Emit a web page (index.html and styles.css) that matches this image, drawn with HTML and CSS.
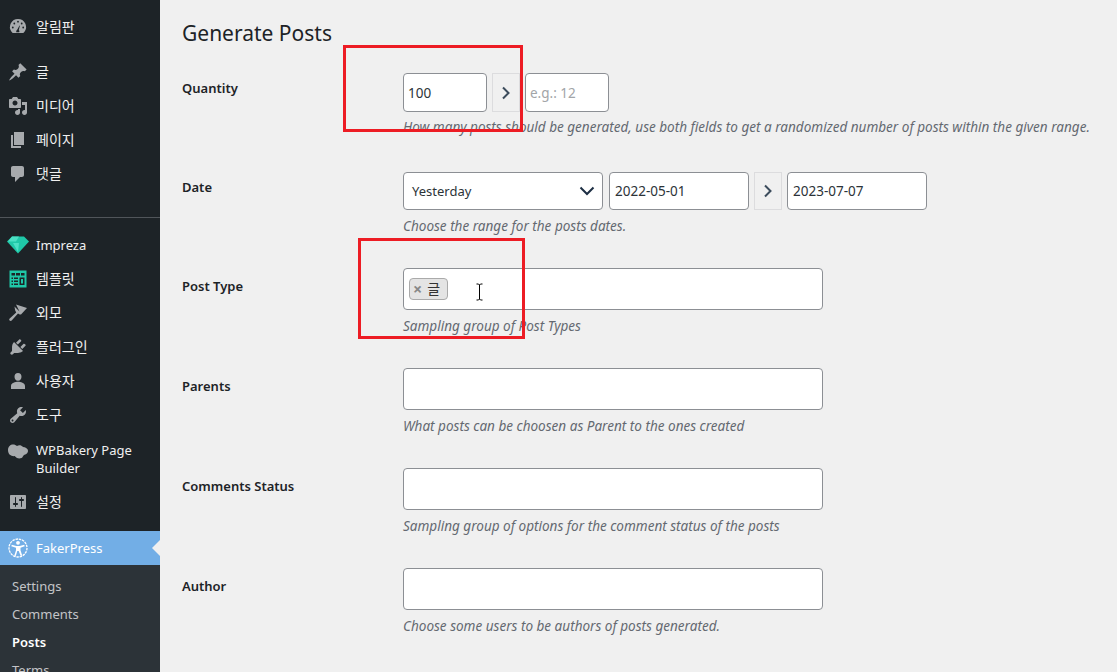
FILE: index.html
```html
<!DOCTYPE html>
<html lang="ko">
<head>
    <meta charset="UTF-8">
    <meta name="viewport" content="width=device-width, initial-scale=1.0">
    <title>Generate Posts</title>
    <link rel="stylesheet" href="styles.css">
</head>
<body>
    <!-- Admin menu -->
    <aside class="sidebar">
        <ul class="menu menu-top">
            <li class="menu-item menu-first">
                <svg class="menu-icon" viewBox="0 0 20 20"><path d="M10 2a8 8 0 0 1 6.500 12.700l-1.200 1.300H4.700l-1.200-1.300A8 8 0 0 1 10 2z"/><g class="icon-cut"><circle cx="4.800" cy="10.500" r=".9"/><circle cx="6.300" cy="6.500" r=".9"/><circle cx="10" cy="4.700" r=".9"/><circle cx="13.700" cy="6.500" r=".9"/><circle cx="15.200" cy="10.500" r=".9"/><path d="M8.300 15.200c-.3-1 .2-2 .9-2.400l2.300-4.300.4.200-1.100 4.200c.6.600.8 1.500.4 2.300z"/></g></svg>
                <span class="label-ko">알림판</span>
            </li>
            <li class="menu-item menu-gap">
                <svg class="menu-icon" viewBox="0 0 20 20"><path d="M10.440 3.020l1.820-1.820 6.360 6.350-1.830 1.820c-1.050-.68-2.480-.57-3.410.36l-.75.75c-.92.93-1.040 2.350-.35 3.410l-1.830 1.820-2.410-2.410-2.800 2.790c-.42.42-3.380 2.710-3.800 2.290s1.860-3.390 2.280-3.810l2.790-2.790L4.100 9.360l1.830-1.820c1.050.69 2.480.57 3.400-.36l.75-.75c.93-.92 1.050-2.350.36-3.410z"/></svg>
                <span class="label-ko">글</span>
            </li>
            <li class="menu-item">
                <svg class="menu-icon" viewBox="0 0 20 20"><path fill-rule="evenodd" d="M13 11V4c0-.55-.45-1-1-1h-1.670L9 1H5L3.670 3H2c-.55 0-1 .45-1 1v7c0 .55.45 1 1 1h10c.55 0 1-.45 1-1zM7 4.500c1.380 0 2.500 1.120 2.500 2.500S8.380 9.500 7 9.500 4.500 8.380 4.500 7 5.620 4.500 7 4.500zM14 6h5v10.500c0 1.380-1.120 2.500-2.500 2.500S14 17.880 14 16.500s1.120-2.500 2.500-2.500c.17 0 .34.020.5.050V9h-3V6zm-4 8.050V13h2v3.500c0 1.380-1.120 2.500-2.500 2.500S7 17.880 7 16.500 8.120 14 9.500 14c.17 0 .34.020.5.050z"/></svg>
                <span class="label-ko">미디어</span>
            </li>
            <li class="menu-item">
                <svg class="menu-icon" viewBox="0 0 20 20"><path d="M6 15V2h10v13H6zm-1 1h8v2H3V5h2v11z"/></svg>
                <span class="label-ko">페이지</span>
            </li>
            <li class="menu-item">
                <svg class="menu-icon" viewBox="0 0 20 20"><path d="M5 2h9c1.100 0 2 .9 2 2v7c0 1.100-.9 2-2 2h-2l-5 5v-5H5c-1.100 0-2-.9-2-2V4c0-1.100.9-2 2-2z"/></svg>
                <span class="label-ko">댓글</span>
            </li>
        </ul>
        <div class="menu-separator"></div>
        <ul class="menu">
            <li class="menu-item">
                <svg class="menu-icon icon-wide" viewBox="0 0 24 20"><path class="gem-dark" d="M1 6.500L6 1.500h12l5 5L12 18.500z"/><path class="gem-light" d="M6 1.500h7l-3 5H2zM7 8l5 9 1-9z"/></svg>
                <span>Impreza</span>
            </li>
            <li class="menu-item">
                <svg class="menu-icon icon-template" viewBox="0 0 20 20"><path fill-rule="evenodd" d="M1.500 1.500h17v17h-17zM3.500 4v2.500h3.500V4zM8 4v2.500h4V4zM13 4v2.500h3.500V4zM3.500 8.500v1.500h1.500V8.500zM6 8.500v1.500h4V8.500zM3.500 11.500V13h1.500v-1.500zM6 11.500V13h4v-1.500zM3.500 14.500V16h1.500v-1.500zM6 14.500V16h4v-1.500zM11.500 8.500V16h5V8.500zM13 10h2v4.500h-2z"/></svg>
                <span class="label-ko">템플릿</span>
            </li>
            <li class="menu-item">
                <svg class="menu-icon" viewBox="0 0 20 20"><path d="M8 1.500l11 3.500-6 6.500zM6.500 3.500l7 7-1.300 1.300-2.200-1.200-6.300 6.900c-.6.600-1.600.600-2.100 0-.6-.6-.5-1.500.1-2.100l6.500-5.900-1.100-2.300z"/></svg>
                <span class="label-ko">외모</span>
            </li>
            <li class="menu-item">
                <svg class="menu-icon" viewBox="0 0 20 20"><path d="M13.110 4.360L9.870 7.600 8 5.730l3.240-3.240c.35-.34 1.050-.2 1.560.32.520.51.660 1.210.310 1.550zm-8 1.770l.91-1.120 9.010 9.010-1.190.840c-.71.710-2.630 1.160-3.820 1.160H6.140L4.900 17.260c-.59.590-1.540.590-2.120 0-.59-.58-.59-1.530 0-2.120l1.240-1.240v-3.880c0-1.130.4-3.190 1.090-3.890zm7.260 3.970l3.240-3.240c.34-.35 1.040-.21 1.550.31.520.51.660 1.210.310 1.550l-3.240 3.250z"/></svg>
                <span class="label-ko">플러그인</span>
            </li>
            <li class="menu-item">
                <svg class="menu-icon" viewBox="0 0 20 20"><path d="M10 9.800c-2.300 0-3.500-1.900-3.500-4S7.700 2 10 2s3.500 1.700 3.500 3.800-1.200 4-3.500 4zM10 10.800c2.500 0 7 1 7 4.200v3H3v-3c0-3.200 4.500-4.200 7-4.200z"/></svg>
                <span class="label-ko">사용자</span>
            </li>
            <li class="menu-item">
                <svg class="menu-icon" viewBox="0 0 20 20"><path fill-rule="evenodd" d="M16.680 9.770c-1.340 1.340-3.300 1.670-4.950.99l-5.410 6.520c-.99.99-2.590.99-3.570 0-.99-.98-.99-2.580 0-3.570l6.520-5.420c-.68-1.650-.35-3.610.99-4.950 1.280-1.280 3.120-1.620 4.720-1.060l-2.890 2.890 2.820 2.820 2.860-2.870c.53 1.580.18 3.410-1.090 4.670zM3.810 16.210c.4.390 1.040.39 1.430 0 .4-.4.4-1.040 0-1.430-.39-.4-1.030-.4-1.430 0-.39.39-.39 1.030 0 1.430z"/></svg>
                <span class="label-ko">도구</span>
            </li>
            <li class="menu-item menu-tall">
                <svg class="menu-icon icon-cloud" viewBox="0 0 20 20"><path d="M5 .5c1.700 0 3 .6 4 1.500 1.300-1 3-.9 4-.4 1 .5 1.500 1.200 2.300 1.500 2 .2 4.700 1.500 4.700 4 0 2.500-2.500 3.500-4 4-1 .8-1.200 2.500-2.500 3-1.500.5-3 .5-4.500 0-1-.4-1.500-1.500-2.500-2-2.700.4-6.500-1-6.500-6C0 2.500 2.500.5 5 .5z"/></svg>
                <span>WPBakery Page Builder</span>
            </li>
            <li class="menu-item">
                <svg class="menu-icon" viewBox="0 0 20 20"><path fill-rule="evenodd" d="M18 16V4c0-.55-.45-1-1-1H3c-.55 0-1 .45-1 1v12c0 .55.45 1 1 1h14c.55 0 1-.45 1-1zM8 11h1c.55 0 1 .45 1 1s-.45 1-1 1H8v1.500c0 .28-.22.5-.5.5s-.5-.22-.5-.5V13H6c-.55 0-1-.45-1-1s.45-1 1-1h1V5.500c0-.28.22-.5.5-.5s.5.22.5.5V11zm5-2h-1c-.55 0-1-.45-1-1s.45-1 1-1h1V5.500c0-.28.22-.5.5-.5s.5.22.5.5V7h1c.55 0 1 .45 1 1s-.45 1-1 1h-1v5.500c0 .28-.22.5-.5.5s-.5-.22-.5-.5V9z"/></svg>
                <span class="label-ko">설정</span>
            </li>
            <li class="menu-item menu-current">
                <svg class="menu-icon icon-access" viewBox="0 0 20 20"><circle class="access-ring" cx="10" cy="10" r="9"/><circle cx="10" cy="4.800" r="1.900"/><path d="M3.800 6.800l4.500 1.100h3.400l4.500-1.100.5 1.500-4.200 1.500v2.400l1.700 5.300-1.500.5L10.700 13h-1.400l-1.500 5-1.500-.5 1.700-5.300V9.800L3.300 8.300z"/></svg>
                <span>FakerPress</span>
            </li>
        </ul>
        <ul class="submenu">
            <li>Settings</li>
            <li>Comments</li>
            <li class="submenu-current">Posts</li>
            <li>Terms</li>
        </ul>
    </aside>

    <!-- Generator form -->
    <main class="content">
        <h1 class="page-title">Generate Posts</h1>

        <div class="form-row row-quantity">
            <label class="form-label">Quantity</label>
            <div class="form-field">
                <div class="control-line">
                    <input class="text-input input-small" type="text" value="100">
                    <span class="range-arrow"><svg viewBox="0 0 12 16"><path d="M3 2.500L8.500 8 3 13.500"/></svg></span>
                    <input class="text-input input-small" type="text" placeholder="e.g.: 12">
                </div>
                <p class="description desc-tight">How many posts should be generated, use both fields to get a randomized number of posts within the given range.</p>
            </div>
        </div>

        <div class="form-row row-date">
            <label class="form-label">Date</label>
            <div class="form-field">
                <div class="control-line line-date">
                    <div class="select-box">
                        <span>Yesterday</span>
                        <svg viewBox="0 0 16 10"><path d="M1.500 1.500L8 8l6.500-6.500"/></svg>
                    </div>
                    <input class="text-input input-date" type="text" value="2022-05-01">
                    <span class="range-arrow"><svg viewBox="0 0 12 16"><path d="M3 2.500L8.500 8 3 13.500"/></svg></span>
                    <input class="text-input input-date" type="text" value="2023-07-07">
                </div>
                <p class="description">Choose the range for the posts dates.</p>
            </div>
        </div>

        <div class="form-row">
            <label class="form-label">Post Type</label>
            <div class="form-field">
                <div class="tag-input">
                    <span class="tag"><b class="tag-remove">×</b><span class="label-ko">글</span></span>
                </div>
                <p class="description">Sampling group of Post Types</p>
            </div>
        </div>

        <div class="form-row">
            <label class="form-label">Parents</label>
            <div class="form-field">
                <div class="tag-input"></div>
                <p class="description">What posts can be choosen as Parent to the ones created</p>
            </div>
        </div>

        <div class="form-row">
            <label class="form-label">Comments Status</label>
            <div class="form-field">
                <div class="tag-input"></div>
                <p class="description">Sampling group of options for the comment status of the posts</p>
            </div>
        </div>

        <div class="form-row">
            <label class="form-label">Author</label>
            <div class="form-field">
                <div class="tag-input"></div>
                <p class="description">Choose some users to be authors of posts generated.</p>
            </div>
        </div>
    </main>

    <!-- Markup drawn over the screenshot -->
    <div class="callout callout-quantity"></div>
    <div class="callout callout-type"></div>
    <svg class="text-cursor" viewBox="0 0 9 18"><path d="M1.500 1h2l1 1 1-1h2M4.500 2v14M1.500 17h2l1-1 1 1h2"/></svg>
</body>
</html>
```

FILE: styles.css
```css
* {
    box-sizing: border-box;
}
html, body {
    height: 100%;
}
body {
    margin: 0;
    display: flex;
    overflow: hidden;
    background-color: #f0f0f0;
    color: #3c434a;
    font-family: "Noto Sans", "Noto Sans CJK KR", sans-serif;
    font-size: 13px;
    line-height: 18px;
}

/* Style for admin menu */
.sidebar {
    width: 160px;
    flex-shrink: 0;
    height: 100%;
    overflow: hidden;
    background-color: #1d2327;
    color: #f0f0f0;
}
.menu, .submenu {
    list-style: none;
    margin: 0;
    padding: 0;
}
.menu-top {
    padding-top: 10px;
}
.menu-item {
    display: flex;
    align-items: center;
    height: 34px;
    padding-left: 8px;
    gap: 8px;
}
.label-ko {
    font-size: 14px;
}
.menu-gap {
    margin-top: 11px;
}
.menu-tall {
    height: 52px;
    margin-top: 1px;
}
.menu-icon {
    width: 20px;
    height: 20px;
    flex-shrink: 0;
    fill: #a7aaad;
}
.icon-cut {
    fill: #1d2327;
}
.icon-wide {
    width: 24px;
    margin-left: -2px;
    margin-right: -2px;
}
.gem-dark {
    fill: #1fc8a8;
}
.gem-light {
    fill: #4be0c4;
}
.icon-template {
    fill: #1fc8a8;
}
.icon-cloud {
    align-self: flex-start;
    margin-top: 11px;
}
.menu-separator {
    height: 1px;
    margin-top: 26px;
    margin-bottom: 10px;
    background-color: #50555a;
}
.menu-current {
    position: relative;
    margin-top: 12px;
    background-color: #72aee6;
    color: #fff;
}
.menu-current::after {
    content: "";
    position: absolute;
    right: 0;
    top: 9px;
    border: 8px solid transparent;
    border-right-color: #f0f0f0;
    border-left-width: 0;
}
.icon-access {
    fill: #fff;
}
.access-ring {
    fill: none;
    stroke: #fff;
    stroke-width: 1.300;
    stroke-dasharray: 2.500 .8;
}
.submenu {
    padding-top: 7px;
    background-color: #2c3338;
    color: #c3c4c7;
    height: 200px;
}
.submenu li {
    height: 28px;
    padding-left: 12px;
    line-height: 28px;
}
.submenu .submenu-current {
    color: #fff;
    font-weight: 600;
}

/* Style for form */
.content {
    flex: 1;
    min-width: 0;
    padding: 19px 0 0 22px;
}
.page-title {
    margin: 0 0 25px;
    color: #1d2327;
    font-size: 21px;
    font-weight: 400;
    line-height: 29px;
}
.form-row {
    display: flex;
    margin-bottom: 33px;
}
.row-quantity {
    margin-bottom: 36px;
}
.form-label {
    width: 221px;
    flex-shrink: 0;
    padding-top: 9px;
    color: #1d2327;
    font-weight: 600;
}
.row-quantity .form-label, .row-date .form-label {
    padding-top: 6px;
}
.form-field {
    flex: 1;
    min-width: 0;
}
.control-line {
    display: flex;
    gap: 5px;
    height: 39px;
}
.line-date {
    height: 38px;
}
.text-input {
    height: 100%;
    padding: 0 5px;
    border: 1px solid #8c8f94;
    border-radius: 4px;
    background-color: #fff;
    color: #2c3338;
    font: inherit;
    font-size: 13.500px;
    outline: none;
}
.text-input::placeholder {
    color: #a2a5a8;
}
.input-small {
    width: 84px;
    padding-left: 4px;
}
.input-date {
    width: 140px;
}
.range-arrow {
    display: flex;
    align-items: center;
    justify-content: center;
    width: 28px;
    border: 1px solid #dcdcde;
}
.range-arrow svg {
    width: 12px;
    height: 16px;
    fill: none;
    stroke: #3c4c5c;
    stroke-width: 2;
}
.select-box {
    display: flex;
    align-items: center;
    justify-content: space-between;
    width: 200px;
    margin-right: 1px;
    padding: 0 7px 0 8px;
    border: 1px solid #8c8f94;
    border-radius: 4px;
    background-color: #fff;
    color: #2c3338;
}
.select-box svg {
    width: 16px;
    height: 10px;
    fill: none;
    stroke: #1d2f44;
    stroke-width: 2;
}
.tag-input {
    display: flex;
    align-items: flex-start;
    width: 420px;
    height: 42px;
    padding: 9px 5px;
    border: 1px solid #8c8f94;
    border-radius: 4px;
    background-color: #fff;
}
.tag {
    display: flex;
    align-items: center;
    width: 39px;
    height: 22px;
    padding-left: 3px;
    border: 1px solid #aaa;
    border-radius: 4px;
    background-color: #e4e4e4;
    color: #333;
}
.tag-remove {
    margin-right: 5px;
    color: #888;
    font-size: 16px;
}
.description {
    margin: 7px 0 0;
    color: #646970;
    font-size: 13.540px;
    font-style: italic;
    white-space: nowrap;
}
.desc-tight {
    margin-top: 6px;
}

/* Red marks over the page */
.callout {
    position: absolute;
    border: 3px solid #ed1c24;
}
.callout-quantity {
    left: 343px;
    top: 45px;
    width: 180px;
    height: 87px;
}
.callout-type {
    left: 358px;
    top: 238px;
    width: 167px;
    height: 101px;
}
.text-cursor {
    position: absolute;
    left: 475px;
    top: 283px;
    width: 9px;
    height: 18px;
    fill: none;
    stroke: #000;
    stroke-width: 1;
}
```
